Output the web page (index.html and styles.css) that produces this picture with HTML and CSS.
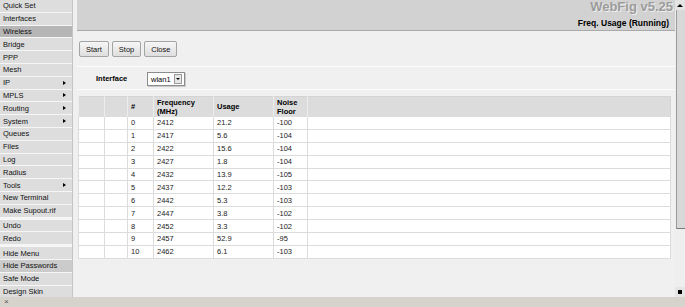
FILE: index.html
```html
<!DOCTYPE html>
<html lang="en">
<head>
    <meta charset="UTF-8">
    <title>WebFig v5.25 - Freq. Usage</title>
    <link rel="stylesheet" href="styles.css">
</head>
<body>
    <div class="app">
        <div class="menu">
            <div class="menu-group">
                <div class="menu-item">Quick Set</div>
                <div class="menu-item">Interfaces</div>
                <div class="menu-item active">Wireless</div>
                <div class="menu-item">Bridge</div>
                <div class="menu-item">PPP</div>
                <div class="menu-item">Mesh</div>
                <div class="menu-item sub">IP</div>
                <div class="menu-item sub">MPLS</div>
                <div class="menu-item sub">Routing</div>
                <div class="menu-item sub">System</div>
                <div class="menu-item">Queues</div>
                <div class="menu-item">Files</div>
                <div class="menu-item">Log</div>
                <div class="menu-item">Radius</div>
                <div class="menu-item sub">Tools</div>
                <div class="menu-item">New Terminal</div>
                <div class="menu-item">Make Supout.rif</div>
            </div>
            <div class="menu-group">
                <div class="menu-item">Undo</div>
                <div class="menu-item">Redo</div>
            </div>
            <div class="menu-group">
                <div class="menu-item">Hide Menu</div>
                <div class="menu-item marked">Hide Passwords</div>
                <div class="menu-item">Safe Mode</div>
                <div class="menu-item">Design Skin</div>
            </div>
        </div>

        <div class="main">
            <div class="title-bar">
                <div class="brand">WebFig v5.25</div>
                <div class="page-title">Freq. Usage (Running)</div>
            </div>

            <div class="toolbar">
                <button class="btn">Start</button>
                <button class="btn">Stop</button>
                <button class="btn">Close</button>
            </div>

            <div class="form-row">
                <label class="form-label">Interface</label>
                <div class="select">
                    <span class="select-value">wlan1</span>
                    <span class="select-btn"></span>
                </div>
            </div>

            <table class="grid">
                <thead>
                    <tr>
                        <th class="c-a"></th>
                        <th class="c-b"></th>
                        <th class="c-num">#</th>
                        <th class="c-freq">Frequency<br>(MHz)</th>
                        <th class="c-use">Usage</th>
                        <th class="c-noise">Noise<br>Floor</th>
                        <th></th>
                    </tr>
                </thead>
                <tbody id="rows"></tbody>
            </table>
        </div>

        <div class="scrollbar">
            <div class="sb-arrow up"></div>
            <div class="sb-thumb"></div>
            <div class="sb-track"></div>
            <div class="sb-arrow down"></div>
        </div>
    </div>

    <div class="status-bar">&times;</div>

    <script>
        const data = [
            [0, 2412, '21.2', -100],
            [1, 2417, '5.6', -104],
            [2, 2422, '15.6', -104],
            [3, 2427, '1.8', -104],
            [4, 2432, '13.9', -105],
            [5, 2437, '12.2', -103],
            [6, 2442, '5.3', -103],
            [7, 2447, '3.8', -102],
            [8, 2452, '3.3', -102],
            [9, 2457, '52.9', -95],
            [10, 2462, '6.1', -103]
        ];

        const tbody = document.getElementById('rows');
        data.forEach(function(row) {
            const tr = document.createElement('tr');
            if (row[0] === 6) tr.className = 'group-start'; // linea mas oscura entre 5 y 6
            tr.innerHTML = '<td></td><td></td>' +
                '<td>' + row[0] + '</td>' +
                '<td>' + row[1] + '</td>' +
                '<td>' + row[2] + '</td>' +
                '<td>' + row[3] + '</td><td></td>';
            tbody.appendChild(tr);
        });
    </script>
</body>
</html>
```

FILE: styles.css
```css
body {
    margin: 0;
    font-family: "Liberation Sans", Arial, sans-serif;
    font-size: 7.5px;
    color: #000;
    background-color: #f0f0f0;
    overflow: hidden;
}

.app {
    display: flex;
    height: 297px;
    overflow: hidden;
}

/* menu izquierdo */
.menu {
    width: 72px;
    flex-shrink: 0;
    background-color: #f6f6f6;
    border-right: 1px solid #c4c4c4;
    overflow: hidden;
}
.menu-group {
    margin-bottom: 2px;
}
.menu-item {
    display: flex;
    align-items: center;
    height: 11.8px;
    padding-left: 3px;
    background-color: #dddddd;
    border-bottom: 1px solid #f6f6f6;
    color: #111;
}
.menu-item.active {
    background-color: #b6b6b6;
}
.menu-item.marked {
    background-color: #cbcbcb;
}
.menu-item.sub::after {
    content: "";
    margin-left: auto;
    margin-right: 6px;
    border-left: 3px solid #000;
    border-top: 2px solid transparent;
    border-bottom: 2px solid transparent;
}

/* area principal */
.main {
    flex: 1;
    margin-left: 4px;
    display: flex;
    flex-direction: column;
}
.title-bar {
    height: 30px;
    background-color: #d2d2d2;
    border-bottom: 1px solid #a9a9a9;
    text-align: right;
}
.brand {
    font-size: 13px;
    font-weight: bold;
    color: #9c9c9c;
    text-shadow: 1px 1px 0 #eeeeee;
    line-height: 14px;
    padding-right: 2px;
}
.page-title {
    font-size: 8.5px;
    font-weight: bold;
    margin-top: 4px;
    padding-right: 6px;
}

.toolbar {
    display: flex;
    gap: 3px;
    padding: 10px 2px 9px;
    border-bottom: 1px solid #fbfbfb;
}
.btn {
    height: 16px;
    padding: 0 6px;
    font-family: inherit;
    font-size: 7.5px;
    color: #111;
    background: linear-gradient(#f6f6f6, #dedede);
    border: 1px solid #a4a4a4;
    border-radius: 2px;
}

.form-row {
    display: flex;
    align-items: center;
    height: 22px;
    padding-left: 19px;
    border-bottom: 1px solid #fbfbfb;
}
.form-label {
    width: 51px;
    font-weight: bold;
}
.select {
    display: flex;
    align-items: center;
    height: 12px;
    margin-top: 2px;
    background-color: #fff;
    border: 1px solid #8c8c8c;
    box-shadow: 1px 1px 0 #c8c8c8;
}
.select-value {
    padding: 0 3px;
}
.select-btn {
    width: 6px;
    height: 8px;
    margin-right: 2px;
    background-color: #e6e6e6;
    border: 1px solid #9a9a9a;
    position: relative;
}
.select-btn::after {
    content: "";
    position: absolute;
    left: 1px;
    top: 3px;
    border-top: 2px solid #000;
    border-left: 2px solid transparent;
    border-right: 2px solid transparent;
}

/* tabla */
.grid {
    width: 593px;
    margin: 6px 0 0 1px;
    border-collapse: collapse;
    border: 1px solid #d4d4d4;
    table-layout: fixed;
}
.grid th {
    height: 19px;
    padding: 0 3px;
    text-align: left;
    font-weight: bold;
    line-height: 9px;
    background-color: #dcdcdc;
    border-left: 1px solid #ececec;
}
.grid td {
    height: 11.9px;
    padding: 0 3px;
    background-color: #fff;
    border: 1px solid #dcdcdc;
    color: #222;
}
.grid tr.group-start td {
    border-top: 1px solid #b4b4b4;
}
.c-a { width: 19px; }
.c-b { width: 16px; }
.c-num { width: 19px; }
.c-freq { width: 53px; }
.c-use { width: 53px; }
.c-noise { width: 27px; }

/* barra de desplazamiento */
.scrollbar {
    width: 10px;
    flex-shrink: 0;
    display: flex;
    flex-direction: column;
    background-color: #ececec;
}
.sb-arrow {
    height: 10px;
    display: flex;
    align-items: center;
    justify-content: center;
    background-color: #e4e4e4;
}
.sb-arrow.up::after {
    content: "";
    border-bottom: 3px solid #000;
    border-left: 3px solid transparent;
    border-right: 3px solid transparent;
}
.sb-arrow.down::after {
    content: "";
    width: 4px;
    height: 3px;
    border-top: 1px solid #000;
    background-color: #000;
}
.sb-thumb {
    height: 218px;
    margin-left: 1px;
    background-color: #d8d8d8;
    border-left: 1px solid #9c9c9c;
    border-bottom: 1px solid #7a7a7a;
}
.sb-track {
    flex: 1;
    background-color: #eeeeee;
}

.status-bar {
    height: 10px;
    padding-left: 4px;
    background-color: #d6d3cc;
    font-size: 8px;
    line-height: 9px;
    color: #555;
}
```
